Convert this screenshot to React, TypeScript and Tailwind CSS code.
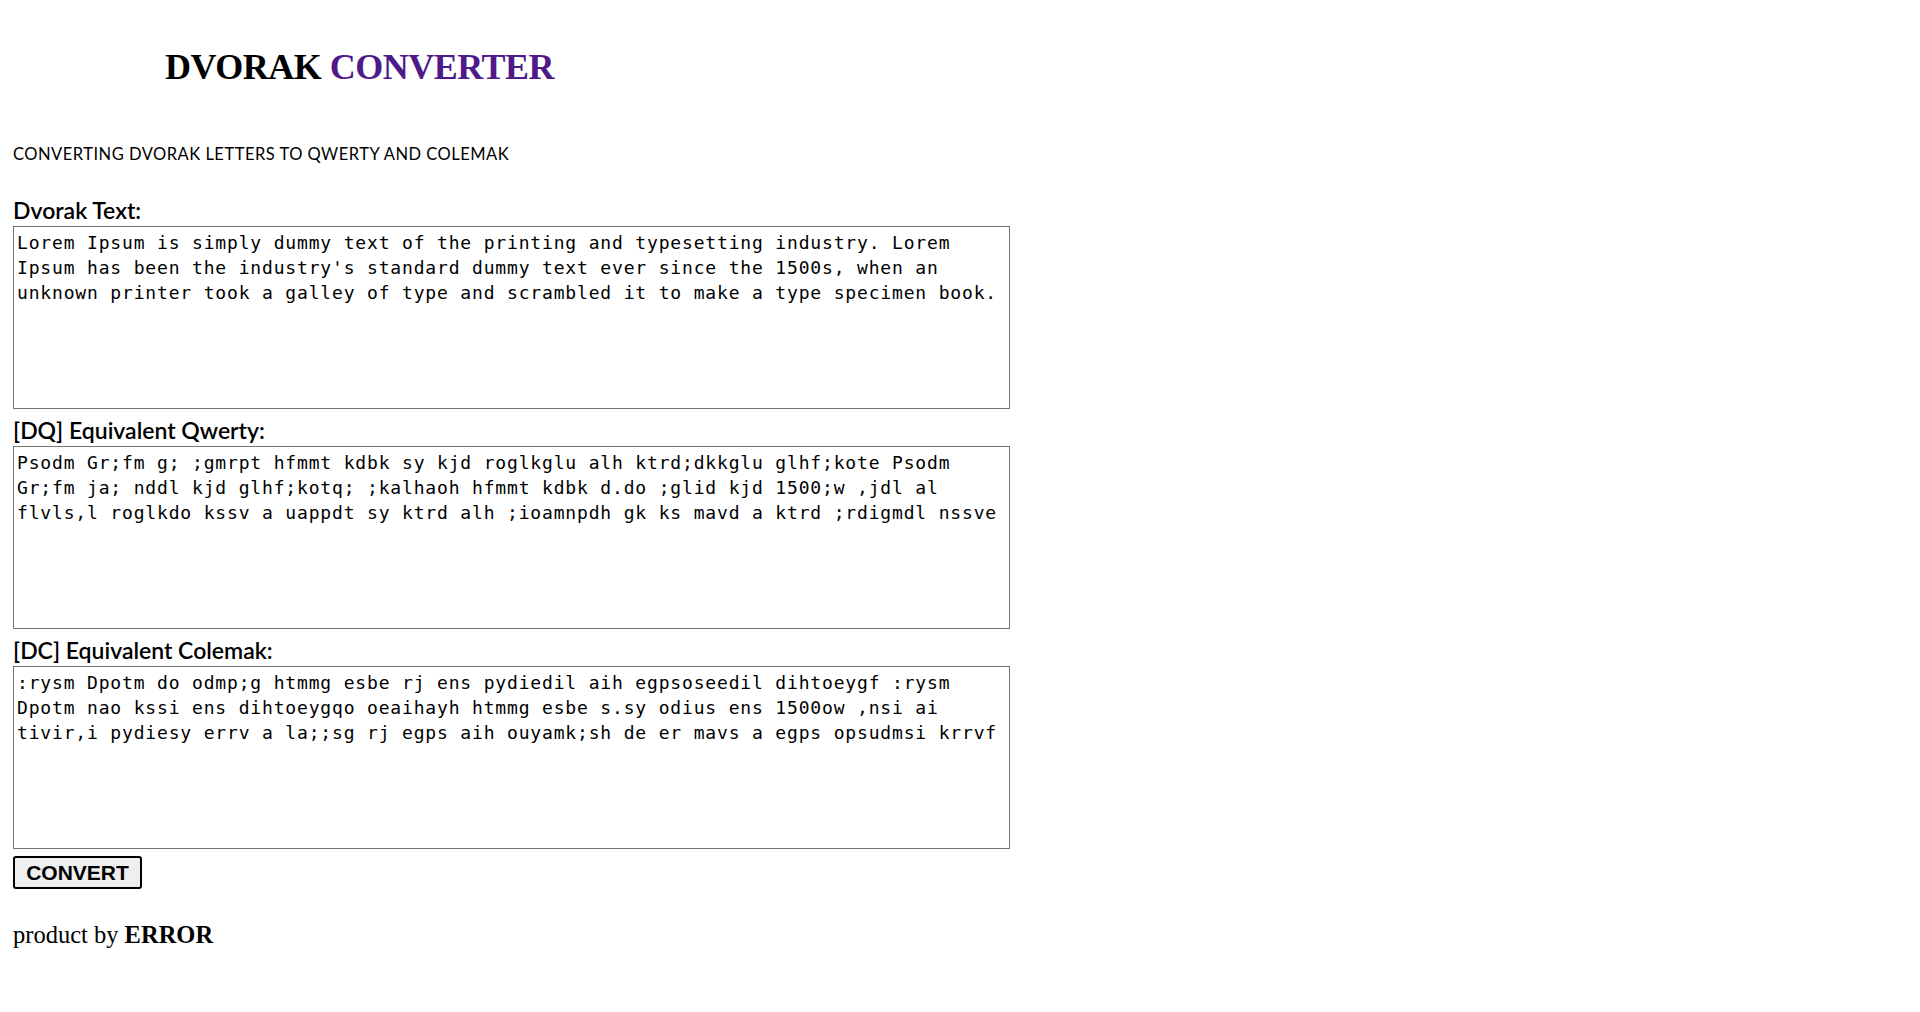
import React, { useState } from "react";

const DVORAK =
  "Lorem Ipsum is simply dummy text of the printing and typesetting industry. Lorem Ipsum has been the industry's standard dummy text ever since the 1500s, when an unknown printer took a galley of type and scrambled it to make a type specimen book.";
const QWERTY =
  "Psodm Gr;fm g; ;gmrpt hfmmt kdbk sy kjd roglkglu alh ktrd;dkkglu glhf;kote Psodm Gr;fm ja; nddl kjd glhf;kotq; ;kalhaoh hfmmt kdbk d.do ;glid kjd 1500;w ,jdl al flvls,l roglkdo kssv a uappdt sy ktrd alh ;ioamnpdh gk ks mavd a ktrd ;rdigmdl nssve";
const COLEMAK =
  ":rysm Dpotm do odmp;g htmmg esbe rj ens pydiedil aih egpsoseedil dihtoeygf :rysm Dpotm nao kssi ens dihtoeygqo oeaihayh htmmg esbe s.sy odius ens 1500ow ,nsi ai tivir,i pydiesy errv a la;;sg rj egps aih ouyamk;sh de er mavs a egps opsudmsi krrvf";

const areaCls =
  "block w-[997px] h-[183px] resize-none border border-[#767676] bg-white px-[3px] pt-[3px] pb-[2px] text-[18px] leading-[25px] tracking-[0.83px] text-black outline-none [font-family:'DejaVu_Sans_Mono',monospace]";

function Field({ label, value, onChange }: { label: string; value: string; onChange?: (v: string) => void }) {
  return (
    <div>
      <label className="block pt-[8px] pb-[2px] text-[23px] leading-[27px] font-semibold tracking-[0px] text-black [font-family:Lato,sans-serif]">
        {label}
      </label>
      <textarea
        className={areaCls}
        value={value}
        readOnly={!onChange}
        onChange={(e) => onChange && onChange(e.target.value)}
        spellCheck={false}
      />
    </div>
  );
}

export default function App() {
  const [text, setText] = useState(DVORAK);

  return (
    <div className="min-h-screen bg-white px-[13px] text-black">
      {/* header */}
      <h1 className="pt-[47px] pl-[152px] text-[36px] leading-[40px] font-bold tracking-[-0.5px] [font-family:'Liberation_Serif',serif]">
        DVORAK <span className="text-[#4e1a8a]">CONVERTER</span>
      </h1>
      <p className="mt-[57px] text-[16.5px] leading-[20px] font-normal tracking-[0.5px] text-black [font-family:Lato,sans-serif]">
        CONVERTING DVORAK LETTERS TO QWERTY AND COLEMAK
      </p>

      <div className="mt-[25px]">
        <Field label="Dvorak Text:" value={text} onChange={setText} />
        <Field label="[DQ] Equivalent Qwerty:" value={QWERTY} />
        <Field label="[DC] Equivalent Colemak:" value={COLEMAK} />
      </div>

      <button className="mt-[7px] h-[33px] w-[129px] rounded-[3px] border-2 border-black bg-[#efefef] text-[21px] leading-none font-bold [font-family:'Liberation_Sans',Arial,sans-serif]">
        CONVERT
      </button>

      <p className="mt-[32px] text-[24.5px] leading-[28px] [font-family:'Liberation_Serif',serif]">
        product by <span className="font-bold">ERROR</span>
      </p>
    </div>
  );
}
